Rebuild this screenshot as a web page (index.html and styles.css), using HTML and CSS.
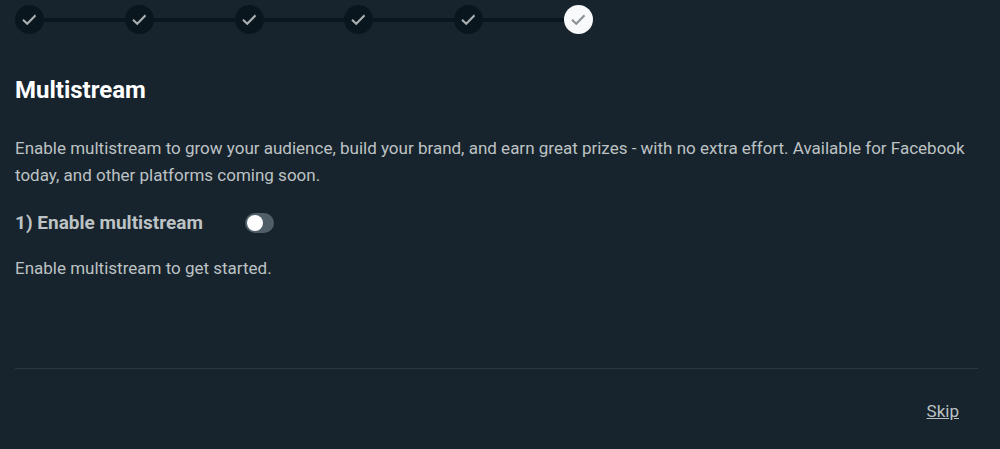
FILE: index.html
```html
<!DOCTYPE html>
<html lang="en">
<head>
  <meta charset="UTF-8">
  <meta name="viewport" content="width=device-width, initial-scale=1">
  <title>Multistream</title>
  <link rel="stylesheet" href="styles.css">
</head>
<body>

  <svg class="sprite" aria-hidden="true">
    <symbol id="check" viewBox="0 0 16 16">
      <path d="M1 8.2 L5.6 12.6 L15 3" fill="none" stroke="currentColor" stroke-width="2.3"/>
    </symbol>
  </svg>

  <main class="onboarding">
    <ol class="steps">
      <li class="step"><svg class="check"><use href="#check"/></svg></li>
      <li class="step"><svg class="check"><use href="#check"/></svg></li>
      <li class="step"><svg class="check"><use href="#check"/></svg></li>
      <li class="step"><svg class="check"><use href="#check"/></svg></li>
      <li class="step"><svg class="check"><use href="#check"/></svg></li>
      <li class="step current" aria-current="step"><svg class="check"><use href="#check"/></svg></li>
    </ol>

    <h1>Multistream</h1>
    <p>Enable multistream to grow your audience, build your brand, and earn great prizes - with no extra effort. Available for Facebook today, and other platforms coming soon.</p>

    <div class="setting">
      <label for="multistream">1) Enable multistream</label>
      <input type="checkbox" id="multistream" class="toggle" role="switch">
    </div>

    <p>Enable multistream to get started.</p>

    <footer class="footer">
      <a href="#" class="skip">Skip</a>
    </footer>
  </main>

</body>
</html>
```

FILE: styles.css
```css
:root {
  --background: #17242d;
  --dark: #09161d;
  --text: #bdc2c4;
  --white: #ffffff;
  --border: #2b383f;
  --toggle: #4f5e67;
}

body {
  margin: 0;
  background: var(--background);
  color: var(--text);
  font-family: Roboto, sans-serif;
  font-size: 17px;
  line-height: 27px;
}

.sprite {
  display: none;
}

.onboarding {
  padding: 5px 22px 0 15px;
}

/* Step tracker */
.steps {
  display: flex;
  max-width: 578px;
  margin: 0;
  padding: 0;
  list-style: none;
}

.step {
  display: flex;
  flex: 1;
  align-items: center;
  color: #a9aeb1;
}

.step:last-child {
  flex: none;
}

.step::after {
  content: "";
  flex: 1;
  height: 4px;
  background: var(--dark);
}

.step:last-child::after {
  display: none;
}

.check {
  box-sizing: border-box;
  width: 29px;
  height: 29px;
  padding: 7px;
  border-radius: 50%;
  background: var(--dark);
}

.current .check {
  background: #f7f9fb;
  color: #8b9195;
}

h1 {
  margin: 41px 0 30px;
  color: var(--white);
  font-size: 24px;
  font-weight: 700;
  line-height: 30px;
}

p {
  margin: 0;
}

.setting {
  display: flex;
  align-items: center;
  gap: 42px;
  margin: 20px 0 19px;
}

.setting label {
  font-size: 19px;
  font-weight: 700;
}

.toggle {
  appearance: none;
  width: 29px;
  height: 20px;
  margin: 0;
  padding: 2px;
  border-radius: 10px;
  background: var(--toggle);
  cursor: pointer;
}

.toggle::before {
  content: "";
  display: block;
  width: 16px;
  height: 16px;
  border-radius: 50%;
  background: var(--white);
}

.toggle:checked {
  background: #31c3a2;
}

.toggle:checked::before {
  margin-left: auto;
}

.footer {
  display: flex;
  justify-content: flex-end;
  margin-top: 86px;
  padding: 29px 19px 24px;
  border-top: 1px solid var(--border);
}

.skip {
  color: inherit;
}
```
